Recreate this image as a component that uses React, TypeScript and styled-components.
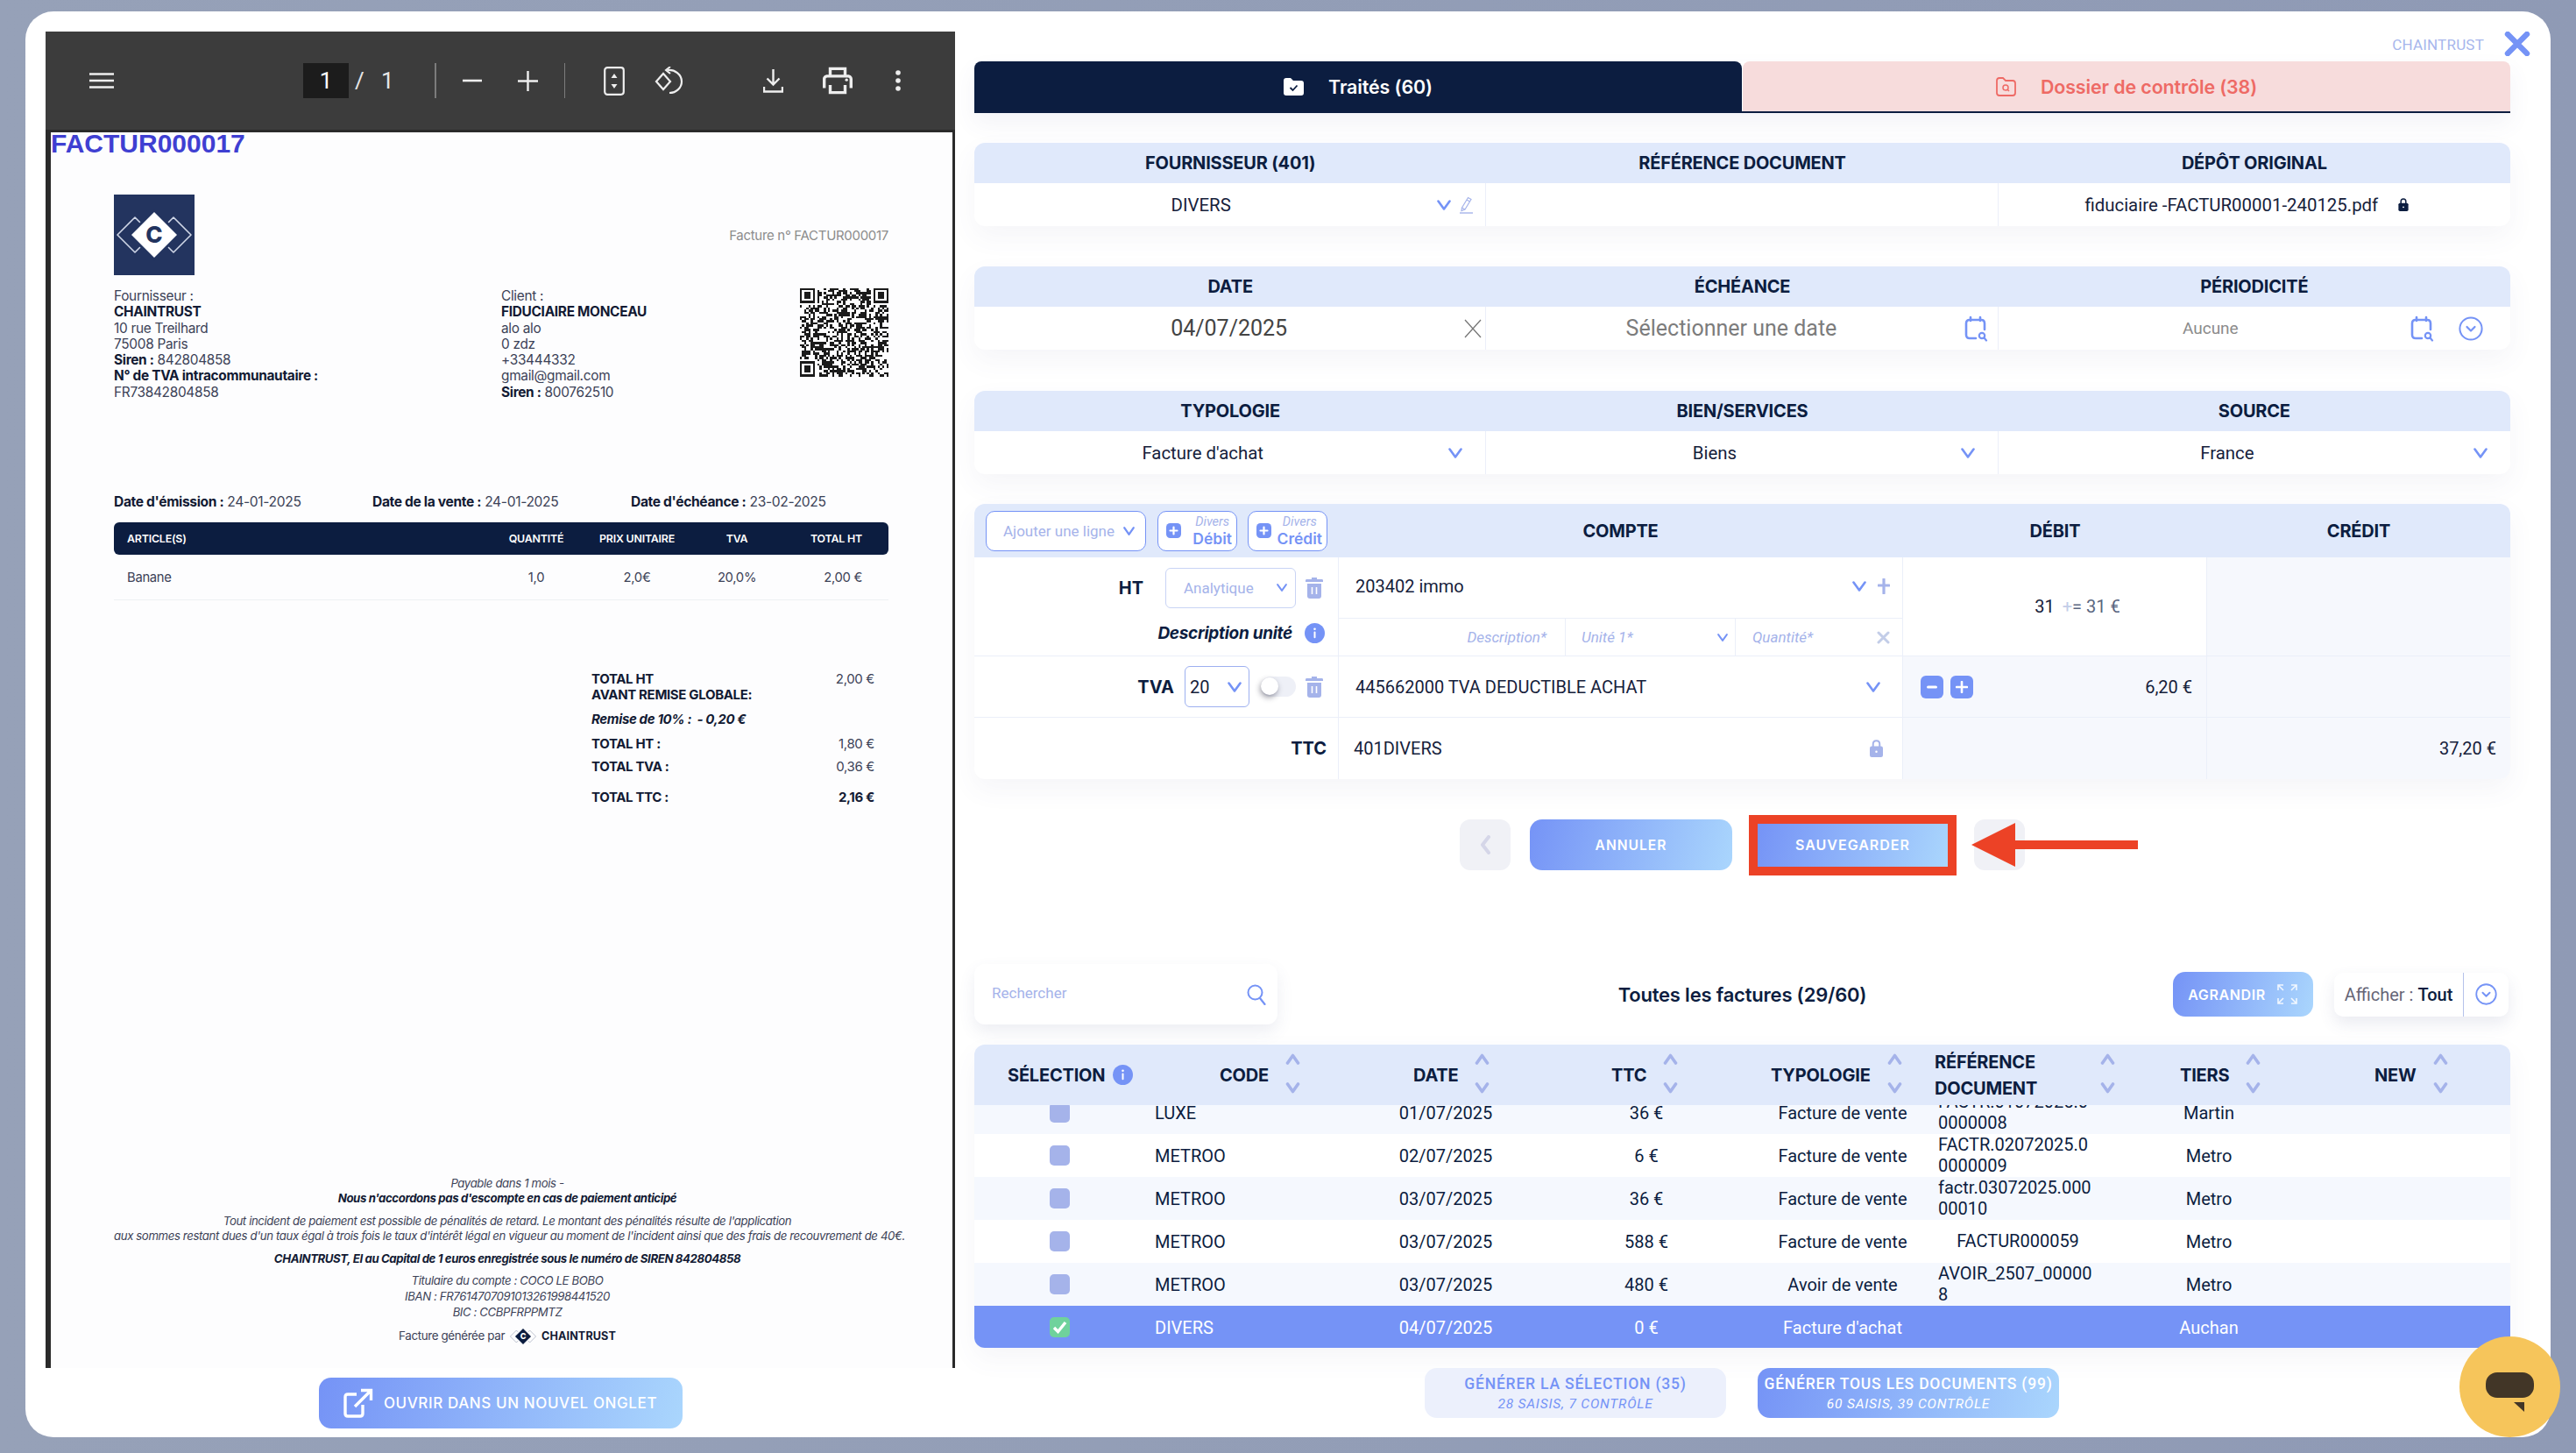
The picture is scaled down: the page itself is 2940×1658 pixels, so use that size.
import React, { useMemo } from 'react';
import styled, { createGlobalStyle } from 'styled-components';

const NAVY = '#0c1d40';
const BLUE = '#7593f6';
const SOFT = '#a5b3ea';
const HEAD = '#e0e9fb';
const LINE = '#ebeff9';
const GRADIENT = 'linear-gradient(105deg, #7593f6 0%, #aad6fd 100%)';

const rows = [
  { code: 'LUXE', date: '01/07/2025', ttc: '36 €', typo: 'Facture de vente', ref: 'FACTR.01072025.00000008', tiers: 'Martin' },
  { code: 'METROO', date: '02/07/2025', ttc: '6 €', typo: 'Facture de vente', ref: 'FACTR.02072025.00000009', tiers: 'Metro' },
  { code: 'METROO', date: '03/07/2025', ttc: '36 €', typo: 'Facture de vente', ref: 'factr.03072025.00000010', tiers: 'Metro' },
  { code: 'METROO', date: '03/07/2025', ttc: '588 €', typo: 'Facture de vente', ref: 'FACTUR000059', tiers: 'Metro' },
  { code: 'METROO', date: '03/07/2025', ttc: '480 €', typo: 'Avoir de vente', ref: 'AVOIR_2507_000008', tiers: 'Metro' },
  { code: 'DIVERS', date: '04/07/2025', ttc: '0 €', typo: "Facture d'achat", ref: '', tiers: 'Auchan', selected: true },
];

const Chevron = ({ w = 16, h = 12, color = BLUE, sw = 2.6 }: { w?: number; h?: number; color?: string; sw?: number }) => (
  <svg width={w} height={h} viewBox="0 0 16 12" fill="none" preserveAspectRatio="none">
    <path d="M1.5 1.5 L8 10.5 L14.5 1.5" stroke={color} strokeWidth={sw} strokeLinecap="round" strokeLinejoin="round" />
  </svg>
);

const CalendarSearch = () => (
  <svg width="27" height="30" viewBox="0 0 27 30" fill="none">
    <path d="M13 26 H6 Q2 26 2 22 V9 Q2 5 6 5 H19 Q23 5 23 9 V16" stroke={BLUE} strokeWidth="2.6" strokeLinecap="round" />
    <path d="M7 2 V6 M18 2 V6" stroke={BLUE} strokeWidth="2.6" strokeLinecap="round" />
    <circle cx="20" cy="23" r="3.2" stroke={BLUE} strokeWidth="2.2" />
    <path d="M22.5 25.5 L25 28.5" stroke={BLUE} strokeWidth="2.2" strokeLinecap="round" />
  </svg>
);

const CircleChevron = ({ size = 28 }: { size?: number }) => (
  <svg width={size} height={size} viewBox="0 0 28 28" fill="none">
    <circle cx="14" cy="14" r="12.6" stroke={BLUE} strokeWidth="2" />
    <path d="M9.5 12 L14 16.5 L18.5 12" stroke={BLUE} strokeWidth="2.2" strokeLinecap="round" strokeLinejoin="round" />
  </svg>
);

const Trash = () => (
  <svg width="20" height="25" viewBox="0 0 20 25" fill="none">
    <path d="M7 1 H13 V3 H19 Q20 3 20 4.5 V6 H0 V4.5 Q0 3 1 3 H7 Z" fill={SOFT} />
    <path d="M2 8 H18 V22 Q18 25 15 25 H5 Q2 25 2 22 Z" fill={SOFT} />
    <path d="M7.5 12 V20 M12.5 12 V20" stroke="#fff" strokeWidth="1.6" />
  </svg>
);

const Lock = ({ color = NAVY, w = 12, h = 16 }: { color?: string; w?: number; h?: number }) => (
  <svg width={w} height={h} viewBox="0 0 12 16" fill="none">
    <path d="M3 7 V4 Q3 1 6 1 Q9 1 9 4 V7" stroke={color} strokeWidth="1.6" />
    <rect x="0" y="6" width="12" height="10" rx="1.8" fill={color} />
    <circle cx="6" cy="11" r="1" fill="#fff" />
  </svg>
);

const Info = ({ size = 23 }: { size?: number }) => (
  <svg width={size} height={size} viewBox="0 0 23 23">
    <circle cx="11.5" cy="11.5" r="11.5" fill={BLUE} />
    <circle cx="11.5" cy="6.8" r="1.3" fill="#fff" />
    <rect x="10.5" y="9.6" width="2" height="7.6" rx="1" fill="#fff" />
  </svg>
);

const PlusTile = () => (
  <svg width="17" height="17" viewBox="0 0 17 17">
    <rect width="17" height="17" rx="4.5" fill={BLUE} />
    <path d="M8.5 4.5 V12.5 M4.5 8.5 H12.5" stroke="#fff" strokeWidth="2.2" strokeLinecap="round" />
  </svg>
);

const SortArrows = () => (
  <SortStack>
    <svg width="17" height="13" viewBox="0 0 17 13" fill="none">
      <path d="M2.5 11 L8.5 2.5 L14.5 11" stroke={SOFT} strokeWidth="3.6" strokeLinecap="round" strokeLinejoin="round" />
    </svg>
    <svg width="17" height="13" viewBox="0 0 17 13" fill="none">
      <path d="M2.5 2 L8.5 10.5 L14.5 2" stroke={SOFT} strokeWidth="3.6" strokeLinecap="round" strokeLinejoin="round" />
    </svg>
  </SortStack>
);

const Emblem = ({ fill, tile, stroke }: { fill: string; tile: string; stroke: string }) => (
  <svg width="100%" height="100%" viewBox="0 0 92 92">
    <rect width="92" height="92" fill={tile} />
    <path d="M24 26 L4 46 L24 66 L44 46 Z" fill="none" stroke={stroke} strokeWidth="1.6" strokeLinejoin="round" />
    <path d="M68 26 L88 46 L68 66 L48 46 Z" fill="none" stroke={stroke} strokeWidth="1.6" strokeLinejoin="round" />
    <path d="M46 20 L72 46 L46 72 L20 46 Z" fill={fill} stroke={tile} strokeWidth="6" strokeLinejoin="round" paintOrder="stroke" />
    <text x="46" y="55" textAnchor="middle" fontFamily="Inter, sans-serif" fontWeight="800" fontSize="26" fill={fill === '#fff' ? tile : '#fff'}>C</text>
  </svg>
);

function QrCode() {
  const d = useMemo(() => {
    const n = 41;
    let seed = 73;
    const next = () => {
      seed = (seed * 16807) % 2147483647;
      return seed % 100 < 50;
    };
    const inFinder = (x: number, y: number, ox: number, oy: number) => x >= ox && x < ox + 8 && y >= oy && y < oy + 8;
    let out = '';
    const cell = (x: number, y: number) => {
      out += `M${x} ${y}h1v1h-1z`;
    };
    for (let y = 0; y < n; y++) {
      for (let x = 0; x < n; x++) {
        const a = next();
        if (inFinder(x, y, 0, 0) || inFinder(x, y, n - 8, 0) || inFinder(x, y, 0, n - 8)) continue;
        if (a) cell(x, y);
      }
    }
    [[0, 0], [n - 7, 0], [0, n - 7]].forEach(([ox, oy]) => {
      for (let y = 0; y < 7; y++) {
        for (let x = 0; x < 7; x++) {
          const ring = x === 0 || y === 0 || x === 6 || y === 6;
          const core = x >= 2 && x <= 4 && y >= 2 && y <= 4;
          if (ring || core) cell(ox + x, oy + y);
        }
      }
    });
    return out;
  }, []);
  return (
    <QrBox viewBox="0 0 41 41" shapeRendering="crispEdges">
      <path d={d} fill="#1b1b1b" />
    </QrBox>
  );
}

export default function App() {
  return (
    <>
      <GlobalStyle />
      <Modal>
        <LeftPane>
          <Viewer>
            <Toolbar>
              <ToolIcon $ml={50}>
                <svg width="28" height="18" viewBox="0 0 28 18"><path d="M0 1.5 H28 M0 9 H28 M0 16.5 H28" stroke="#eee" strokeWidth="2.4" /></svg>
              </ToolIcon>
              <PageBox>1</PageBox>
              <PageCount>/&nbsp;&nbsp;&nbsp;1</PageCount>
              <ToolDivider $ml={25} />
              <ToolIcon $ml={30}>
                <svg width="22" height="4" viewBox="0 0 22 4"><rect width="22" height="2.6" y="0.7" fill="#eee" /></svg>
              </ToolIcon>
              <ToolIcon $ml={41}>
                <svg width="23" height="23" viewBox="0 0 23 23"><path d="M11.5 0 V23 M0 11.5 H23" stroke="#eee" strokeWidth="2.4" /></svg>
              </ToolIcon>
              <ToolDivider $ml={30} />
              <ToolIcon $ml={44}>
                <svg width="24" height="33" viewBox="0 0 24 33" fill="none">
                  <rect x="1.2" y="1.2" width="21.6" height="30.6" rx="3" stroke="#eee" strokeWidth="2.2" />
                  <path d="M12 8 L15.5 13 H8.5 Z M12 25 L15.5 20 H8.5 Z" fill="#eee" />
                </svg>
              </ToolIcon>
              <ToolIcon $ml={34}>
                <svg width="34" height="32" viewBox="0 0 34 32" fill="none">
                  <path d="M2 17 L10 8 L18 17 L10 26 Z" stroke="#eee" strokeWidth="2.2" />
                  <path d="M15 4 C23 3 31 9 31 17 C31 24 25 30 17 30" stroke="#eee" strokeWidth="2.2" />
                  <path d="M18 0 L13 4 L18 8" stroke="#eee" strokeWidth="2" fill="none" />
                </svg>
              </ToolIcon>
              <ToolIcon $ml={90}>
                <svg width="23" height="27" viewBox="0 0 23 27" fill="none">
                  <path d="M11.5 0 V17 M4.5 10.5 L11.5 17.5 L18.5 10.5" stroke="#eee" strokeWidth="2.4" />
                  <path d="M1 20 V25.5 H22 V20" stroke="#eee" strokeWidth="2.4" />
                </svg>
              </ToolIcon>
              <ToolIcon $ml={45}>
                <svg width="34" height="34" viewBox="2 2 20 20" fill="#eee">
                  <path d="M19 8h-1V3H6v5H5c-1.66 0-3 1.34-3 3v6h4v4h12v-4h4v-6c0-1.66-1.34-3-3-3zM8 5h8v3H8V5zm8 14H8v-4h8v4zm2-2v-2H6v2H4v-6c0-.55.45-1 1-1h14c.55 0 1 .45 1 1v6h-2z" />
                  <circle cx="18" cy="11.5" r="1" />
                </svg>
              </ToolIcon>
              <ToolIcon $ml={49}>
                <svg width="6" height="24" viewBox="0 0 6 24" fill="#eee"><circle cx="3" cy="3" r="2.8" /><circle cx="3" cy="12" r="2.8" /><circle cx="3" cy="21" r="2.8" /></svg>
              </ToolIcon>
            </Toolbar>
            <PageFrame>
              <PageTitle>FACTUR000017</PageTitle>
              <PageBody>
                <InvoiceTop>
                  <LogoBox>
                    <Emblem fill="#fff" tile="#23345f" stroke="#cfd6e6" />
                  </LogoBox>
                  <InvoiceNumber>Facture n° FACTUR000017</InvoiceNumber>
                </InvoiceTop>
                <Parties>
                  <PartyBlock>
                    <span>Fournisseur :</span>
                    <b>CHAINTRUST</b>
                    <span>10 rue Treilhard</span>
                    <span>75008 Paris</span>
                    <span><b>Siren :</b> 842804858</span>
                    <b>N° de TVA intracommunautaire :</b>
                    <span>FR73842804858</span>
                  </PartyBlock>
                  <PartyBlock>
                    <span>Client :</span>
                    <b>FIDUCIAIRE MONCEAU</b>
                    <span>alo alo</span>
                    <span>0 zdz</span>
                    <span>+33444332</span>
                    <span>gmail@gmail.com</span>
                    <span><b>Siren :</b> 800762510</span>
                  </PartyBlock>
                  <QrCode />
                </Parties>
                <DatesRow>
                  <span><b>Date d'émission :</b> 24-01-2025</span>
                  <span><b>Date de la vente :</b> 24-01-2025</span>
                  <span><b>Date d'échéance :</b> 23-02-2025</span>
                </DatesRow>
                <ItemsHead>
                  <span>ARTICLE(S)</span>
                  <ItemCenter>QUANTITÉ</ItemCenter>
                  <ItemCenter>PRIX UNITAIRE</ItemCenter>
                  <ItemCenter>TVA</ItemCenter>
                  <ItemRight>TOTAL HT</ItemRight>
                </ItemsHead>
                <ItemRow>
                  <span>Banane</span>
                  <ItemCenter>1,0</ItemCenter>
                  <ItemCenter>2,0€</ItemCenter>
                  <ItemCenter>20,0%</ItemCenter>
                  <ItemRight>2,00 €</ItemRight>
                </ItemRow>
                <Totals>
                  <TotalLine $mt={0}>
                    <b>TOTAL HT<br />AVANT REMISE GLOBALE:</b>
                    <span>2,00 €</span>
                  </TotalLine>
                  <TotalLine $mt={9}>
                    <b><i>Remise de 10% :&nbsp; - 0,20 €</i></b>
                  </TotalLine>
                  <TotalLine $mt={10}>
                    <b>TOTAL HT :</b>
                    <span>1,80 €</span>
                  </TotalLine>
                  <TotalLine $mt={7}>
                    <b>TOTAL TVA :</b>
                    <span>0,36 €</span>
                  </TotalLine>
                  <TotalLine $mt={17}>
                    <b>TOTAL TTC :</b>
                    <b>2,16 €</b>
                  </TotalLine>
                </Totals>
              </PageBody>
              <PageFooter>
                <FooterLine $mt={0}>Payable dans 1 mois -</FooterLine>
                <FooterLine $mt={0}><b>Nous n'accordons pas d'escompte en cas de paiement anticipé</b></FooterLine>
                <FooterLine $mt={8}>Tout incident de paiement est possible de pénalités de retard. Le montant des pénalités résulte de l'application</FooterLine>
                <FooterLine $mt={0}>aux sommes restant dues d'un taux égal à trois fois le taux d'intérêt légal en vigueur au moment de l'incident ainsi que des frais de recouvrement de 40€.</FooterLine>
                <FooterLine $mt={8}><b>CHAINTRUST, EI au Capital de 1 euros enregistrée sous le numéro de SIREN 842804858</b></FooterLine>
                <FooterLine $mt={8}>Titulaire du compte : COCO LE BOBO</FooterLine>
                <FooterLine $mt={0}>IBAN : FR7614707091013261998441520</FooterLine>
                <FooterLine $mt={0}>BIC : CCBPFRPPMTZ</FooterLine>
                <GeneratedBy>
                  <span>Facture générée par</span>
                  <SmallEmblem>
                    <Emblem fill={NAVY} tile="#fdfdfe" stroke="#8a93a8" />
                  </SmallEmblem>
                  <strong>CHAINTRUST</strong>
                </GeneratedBy>
              </PageFooter>
            </PageFrame>
          </Viewer>
          <OpenTabButton>
            <svg width="34" height="34" viewBox="0 0 34 34" fill="none">
              <path d="M15 7 H5 Q2 7 2 10 V29 Q2 32 5 32 H19 Q22 32 22 29 V19" stroke="#fff" strokeWidth="3.4" />
              <path d="M13 21 L31 3 M20 2.5 H31.5 V14" stroke="#fff" strokeWidth="3.4" />
            </svg>
            OUVRIR DANS UN NOUVEL ONGLET
          </OpenTabButton>
        </LeftPane>

        <RightPane>
          <BrandRow>
            <BrandName>CHAINTRUST</BrandName>
            <svg width="30" height="28" viewBox="0 0 30 28" fill="none">
              <path d="M4 3 L26 25 M26 3 L4 25" stroke={BLUE} strokeWidth="6.4" strokeLinecap="round" />
            </svg>
          </BrandRow>

          <Tabs>
            <Tab $active>
              <svg width="23" height="20" viewBox="0 0 23 20">
                <path d="M0 3 Q0 0 3 0 H8 L11 3 H20 Q23 3 23 6 V17 Q23 20 20 20 H3 Q0 20 0 17 Z" fill="#fff" />
                <path d="M7.5 11 L10.5 14 L15.5 8.5" fill="none" stroke={NAVY} strokeWidth="1.8" />
              </svg>
              <span>Traités (60)</span>
            </Tab>
            <Tab>
              <svg width="23" height="22" viewBox="0 0 23 22" fill="none">
                <path d="M1 4 Q1 1 4 1 H8 L11 4 H19 Q22 4 22 7 V18 Q22 21 19 21 H4 Q1 21 1 18 Z" stroke="#ee6a65" strokeWidth="1.8" />
                <circle cx="11" cy="12" r="3" stroke="#ee6a65" strokeWidth="1.5" />
                <path d="M13.2 14.2 L15 16" stroke="#ee6a65" strokeWidth="1.5" />
              </svg>
              <span>Dossier de contrôle (38)</span>
            </Tab>
          </Tabs>

          <FormCard $mt={34}>
            <CardHead>
              <HeadCell>FOURNISSEUR (401)</HeadCell>
              <HeadCell>RÉFÉRENCE DOCUMENT</HeadCell>
              <HeadCell>DÉPÔT ORIGINAL</HeadCell>
            </CardHead>
            <CardBody>
              <ValueCell $pr={14}>
                <ValueText $tail={11}>DIVERS</ValueText>
                <Chevron />
                <PencilBox>
                  <svg width="15" height="20" viewBox="0 0 15 20" fill="none">
                    <path d="M9.5 1.5 L13 3.5 L6 15 L2.5 13 Z M2.5 13 L2 16.5 L6 15 M8 4 L11.5 6" stroke={SOFT} strokeWidth="1.2" />
                    <path d="M0 19 H15" stroke={SOFT} strokeWidth="1.4" />
                  </svg>
                </PencilBox>
              </ValueCell>
              <ValueCell />
              <ValueCell $pr={116} $pl={76}>
                <ValueText>fiduciaire -FACTUR00001-240125.pdf</ValueText>
                <Lock w={12} h={15} />
              </ValueCell>
            </CardBody>
          </FormCard>

          <FormCard $mt={46}>
            <CardHead>
              <HeadCell>DATE</HeadCell>
              <HeadCell>ÉCHÉANCE</HeadCell>
              <HeadCell>PÉRIODICITÉ</HeadCell>
            </CardHead>
            <CardBody>
              <ValueCell $pr={4} $pl={22}>
                <DateText>04/07/2025</DateText>
                <svg width="20" height="22" viewBox="0 0 20 22" fill="none">
                  <path d="M1 1 L19 21 M19 1 L1 21" stroke="#777" strokeWidth="1.3" />
                </svg>
              </ValueCell>
              <ValueCell $pr={11} $pl={14}>
                <DateText $muted>Sélectionner une date</DateText>
                <CalendarSearch />
              </ValueCell>
              <ValueCell $pr={31} $pl={0}>
                <AucuneText>Aucune</AucuneText>
                <CalendarSearch />
                <IconGap><CircleChevron /></IconGap>
              </ValueCell>
            </CardBody>
          </FormCard>

          <FormCard $mt={47}>
            <CardHead>
              <HeadCell>TYPOLOGIE</HeadCell>
              <HeadCell>BIEN/SERVICES</HeadCell>
              <HeadCell>SOURCE</HeadCell>
            </CardHead>
            <CardBody>
              <ValueCell $pr={26} $pl={0}>
                <ValueText $tail={20}>Facture d'achat</ValueText>
                <Chevron />
              </ValueCell>
              <ValueCell $pr={26} $pl={0}>
                <ValueText $tail={20}>Biens</ValueText>
                <Chevron />
              </ValueCell>
              <ValueCell $pr={26} $pl={0}>
                <ValueText $tail={20}>France</ValueText>
                <Chevron />
              </ValueCell>
            </CardBody>
          </FormCard>

          <EntryCard>
            <EntryHead>
              <EntryTools>
                <AddLine>
                  <span>Ajouter une ligne</span>
                  <Chevron w={13} h={10} />
                </AddLine>
                <DiversButton>
                  <PlusTile />
                  <DiversText><i>Divers</i><b>Débit</b></DiversText>
                </DiversButton>
                <DiversButton>
                  <PlusTile />
                  <DiversText><i>Divers</i><b>Crédit</b></DiversText>
                </DiversButton>
              </EntryTools>
              <HeadCell>COMPTE</HeadCell>
              <HeadCell>DÉBIT</HeadCell>
              <HeadCell>CRÉDIT</HeadCell>
            </EntryHead>

            <EntryRow $h={113}>
              <LabelCell>
                <LabelTop>
                  <RowLabel>HT</RowLabel>
                  <AnalyticSelect>
                    <span>Analytique</span>
                    <Chevron w={12} h={9} />
                  </AnalyticSelect>
                  <Trash />
                </LabelTop>
                <LabelBottom>
                  <DescLabel>Description unité</DescLabel>
                  <Info />
                </LabelBottom>
              </LabelCell>
              <AccountStack>
                <AccountTop>
                  <AccountText>203402 immo</AccountText>
                  <Chevron />
                  <svg width="14" height="18" viewBox="0 0 14 18">
                    <path d="M7 1 V17 M1 8 H13" stroke={SOFT} strokeWidth="3.2" strokeLinecap="round" />
                  </svg>
                </AccountTop>
                <UnitRow>
                  <UnitDesc>Description*</UnitDesc>
                  <UnitCell>
                    <span>Unité 1*</span>
                    <Chevron w={12} h={9} />
                  </UnitCell>
                  <UnitQty>
                    <span>Quantité*</span>
                    <svg width="15" height="15" viewBox="0 0 15 15">
                      <path d="M2 2 L13 13 M13 2 L2 13" stroke="#c3cde8" strokeWidth="3" strokeLinecap="round" />
                    </svg>
                  </UnitQty>
                </UnitRow>
              </AccountStack>
              <AmountCell $center>
                <FormulaText>31 <em>+</em><span>= 31 €</span></FormulaText>
              </AmountCell>
              <AmountCell $tinted />
            </EntryRow>

            <EntryRow $h={70}>
              <LabelRowCell>
                <RowLabel>TVA</RowLabel>
                <VatSelect>
                  <span>20</span>
                  <Chevron />
                </VatSelect>
                <ToggleTrack><ToggleKnob /></ToggleTrack>
                <Trash />
              </LabelRowCell>
              <AccountLine $pr={25}>
                <AccountText>445662000 TVA DEDUCTIBLE ACHAT</AccountText>
                <Chevron />
              </AccountLine>
              <AmountCell $tinted>
                <StepGroup>
                  <StepButton>
                    <svg width="12" height="4" viewBox="0 0 12 4"><rect width="12" height="3.2" y="0.4" rx="1.6" fill="#fff" /></svg>
                  </StepButton>
                  <StepButton>
                    <svg width="14" height="14" viewBox="0 0 14 14"><path d="M7 1 V13 M1 7 H13" stroke="#fff" strokeWidth="2.6" strokeLinecap="round" /></svg>
                  </StepButton>
                </StepGroup>
                <AmountText>6,20 €</AmountText>
              </AmountCell>
              <AmountCell $tinted />
            </EntryRow>

            <EntryRow $h={70}>
              <TtcCell><RowLabel>TTC</RowLabel></TtcCell>
              <AccountLine $pr={22} $pl={17}>
                <AccountText>401DIVERS</AccountText>
                <Lock color={SOFT} w={15} h={20} />
              </AccountLine>
              <AmountCell $tinted />
              <AmountCell $tinted>
                <AmountText>37,20 €</AmountText>
              </AmountCell>
            </EntryRow>
          </EntryCard>

          <ActionRow>
            <NavButton>
              <svg width="14" height="22" viewBox="0 0 14 22" fill="none">
                <path d="M11 2 L4 11 L11 20" stroke="#d5d6e8" strokeWidth="4" strokeLinecap="round" strokeLinejoin="round" />
              </svg>
            </NavButton>
            <CancelButton>ANNULER</CancelButton>
            <SaveButton>SAUVEGARDER</SaveButton>
            <NavButton />
            <ArrowMark width="190" height="52" viewBox="0 0 190 52">
              <path d="M0 26 L50 1 V21 H190 V31 H50 V51 Z" fill="#ec4226" />
            </ArrowMark>
          </ActionRow>

          <SearchRow>
            <SearchBox>
              <span>Rechercher</span>
              <svg width="22" height="24" viewBox="0 0 22 24" fill="none">
                <circle cx="9.5" cy="9.5" r="8" stroke={BLUE} strokeWidth="2" />
                <path d="M15 16 L20.5 23" stroke={BLUE} strokeWidth="2.2" strokeLinecap="round" />
              </svg>
            </SearchBox>
            <ListTitle>Toutes les factures (29/60)</ListTitle>
            <SearchTools>
              <ExpandButton>
                AGRANDIR
                <svg width="25" height="25" viewBox="0 0 25 25" fill="none">
                  <path d="M2 8 V2 H8 M2 2 L8 8 M23 8 V2 H17 M23 2 L17 8 M2 17 V23 H8 M2 23 L8 17 M23 17 V23 H17 M23 23 L17 17" stroke="#fff" strokeWidth="1.6" opacity="0.85" />
                </svg>
              </ExpandButton>
              <FilterBox>
                <FilterLabel><span>Afficher : <b>Tout</b></span></FilterLabel>
                <FilterIcon><CircleChevron size={25} /></FilterIcon>
              </FilterBox>
            </SearchTools>
          </SearchRow>

          <TableCard>
            <TableHead>
              <SelectHead>
                <span>SÉLECTION</span>
                <Info />
              </SelectHead>
              <SortHead $pl={86}><span>CODE</span><SortArrows /></SortHead>
              <SortHead $pl={65}><span>DATE</span><SortArrows /></SortHead>
              <SortHead $pl={87}><span>TTC</span><SortArrows /></SortHead>
              <SortHead $pl={15}><span>TYPOLOGIE</span><SortArrows /></SortHead>
              <SortHead $pl={8} $gap={72}><RefHead>RÉFÉRENCE DOCUMENT</RefHead><SortArrows /></SortHead>
              <SortHead $pl={82}><span>TIERS</span><SortArrows /></SortHead>
              <SortHead $pl={74}><span>NEW</span><SortArrows /></SortHead>
            </TableHead>
            <TableScroll>
              <TableRows>
                {rows.map((r, i) => (
                  <TableRow key={i} $odd={i % 2 === 0} $selected={r.selected}>
                    <TableCell>
                      <CheckBox $checked={r.selected}>
                        {r.selected && (
                          <svg width="17" height="15" viewBox="0 0 17 15" fill="none">
                            <path d="M2 8 L6.5 12.5 L15 2" stroke="#fff" strokeWidth="3.4" />
                          </svg>
                        )}
                      </CheckBox>
                    </TableCell>
                    <CodeCell>{r.code}</CodeCell>
                    <TableCell>{r.date}</TableCell>
                    <TableCell>{r.ttc}</TableCell>
                    <TableCell>{r.typo}</TableCell>
                    <RefCell><RefText>{r.ref}</RefText></RefCell>
                    <TableCell>{r.tiers}</TableCell>
                    <TableCell />
                  </TableRow>
                ))}
              </TableRows>
            </TableScroll>
          </TableCard>

          <GenerateRow>
            <GenerateButton>
              <b>GÉNÉRER LA SÉLECTION (35)</b>
              <i>28 SAISIS, 7 CONTRÔLE</i>
            </GenerateButton>
            <GenerateButton $primary>
              <b>GÉNÉRER TOUS LES DOCUMENTS (99)</b>
              <i>60 SAISIS, 39 CONTRÔLE</i>
            </GenerateButton>
          </GenerateRow>
        </RightPane>

        <ChatBubble>
          <svg width="56" height="46" viewBox="0 0 56 46">
            <rect x="0" y="0" width="55" height="29" rx="13" fill="#423627" />
            <path d="M32 34 H44 V45 Z" fill="#423627" />
          </svg>
        </ChatBubble>
      </Modal>
    </>
  );
}

const GlobalStyle = createGlobalStyle`
  html, body {
    margin: 0;
    width: 2940px;
    height: 1658px;
    overflow: hidden;
    background: linear-gradient(90deg, #96a1b8 0%, #8f9ab5 100%);
    font-family: Roboto, "Liberation Sans", sans-serif;
  }
  * { box-sizing: border-box; }
`;

const Modal = styled.div`
  position: relative;
  margin: 13px 0 0 29px;
  width: 2882px;
  height: 1627px;
  padding: 23px 46px 0 23px;
  display: flex;
  gap: 22px;
  background: #fff;
  border-radius: 32px;
`;

const LeftPane = styled.div`
  width: 1038px;
  display: flex;
  flex-direction: column;
  align-items: center;
`;

const Viewer = styled.div`
  width: 100%;
  height: 1525px;
  display: flex;
  flex-direction: column;
`;

const Toolbar = styled.div`
  height: 112px;
  flex: none;
  display: flex;
  align-items: center;
  background: #3c3c3c;
`;

const ToolIcon = styled.div<{ $ml: number }>`
  margin-left: ${(p) => p.$ml}px;
  display: flex;
  align-items: center;
`;

const ToolDivider = styled.div<{ $ml: number }>`
  margin-left: ${(p) => p.$ml}px;
  width: 1.5px;
  height: 40px;
  background: #7c7c7c;
`;

const PageBox = styled.div`
  margin-left: 216px;
  width: 52px;
  height: 40px;
  display: flex;
  align-items: center;
  justify-content: center;
  background: #1c1c1c;
  color: #fff;
  font-size: 26px;
`;

const PageCount = styled.div`
  margin-left: 7px;
  color: #e6e6e6;
  font-size: 26px;
  width: 66px;
  white-space: nowrap;
`;

const PageFrame = styled.div`
  flex: 1;
  background: #fdfdfe;
  border-style: solid;
  border-color: #2a2a2a;
  border-width: 3px 3px 0 6px;
  overflow: hidden;
  font-family: Inter, "Open Sans", sans-serif;
  color: #20263a;
`;

const PageTitle = styled.div`
  height: 29px;
  line-height: 26px;
  color: #3f3fd2;
  font-family: "Liberation Sans", Arial, sans-serif;
  font-weight: 700;
  font-size: 30px;
  white-space: nowrap;
`;

const PageBody = styled.div`
  padding: 42px 73px 0 72px;
`;

const InvoiceTop = styled.div`
  display: flex;
  align-items: center;
  justify-content: space-between;
`;

const LogoBox = styled.div`
  width: 92px;
  height: 92px;
`;

const InvoiceNumber = styled.div`
  font-size: 15px;
  letter-spacing: -0.3px;
  color: #8c8c8c;
`;

const Parties = styled.div`
  margin-top: 14px;
  display: grid;
  grid-template-columns: 442px 1fr 101px;
`;

const PartyBlock = styled.div`
  display: flex;
  flex-direction: column;
  padding-top: 1px;
  font-size: 15.4px;
  line-height: 18.3px;
  letter-spacing: -0.3px;
  color: #3c4257;
  white-space: nowrap;

  b {
    color: #121a33;
    font-weight: 700;
  }
`;

const QrBox = styled.svg`
  width: 101px;
  height: 102px;
`;

const DatesRow = styled.div`
  margin-top: 107px;
  display: grid;
  grid-template-columns: repeat(3, 295px);
  font-size: 15.6px;
  line-height: 18px;
  letter-spacing: -0.35px;
  color: #3c4257;

  b {
    color: #121a33;
    font-weight: 700;
  }
`;

const ItemsHead = styled.div`
  margin-top: 14px;
  height: 37px;
  padding: 0 30px 0 15px;
  display: grid;
  grid-template-columns: 417px 100px 130px 98px 1fr;
  align-items: center;
  background: ${NAVY};
  border-radius: 6px;
  color: #fff;
  font-size: 12.4px;
  font-weight: 600;
  letter-spacing: -0.2px;
`;

const ItemCenter = styled.span`
  text-align: center;
`;

const ItemRight = styled.span`
  text-align: right;
`;

const ItemRow = styled.div`
  height: 52px;
  padding: 0 30px 0 15px;
  display: grid;
  grid-template-columns: 417px 100px 130px 98px 1fr;
  align-items: center;
  border-bottom: 1.5px solid #eef0f3;
  font-size: 14.8px;
  letter-spacing: -0.3px;
  color: #3c4257;
`;

const Totals = styled.div`
  margin: 81px 0 0 545px;
  width: 323px;
  font-size: 15px;
  line-height: 18.4px;
  letter-spacing: -0.35px;
  color: #3c4257;
  white-space: nowrap;

  b {
    color: #121a33;
    font-weight: 700;
  }
`;

const TotalLine = styled.div<{ $mt: number }>`
  margin-top: ${(p) => p.$mt}px;
  display: flex;
  justify-content: space-between;
  align-items: flex-start;
`;

const PageFooter = styled.div`
  margin: 422px 0 0 72px;
  width: 898px;
  text-align: center;
  font-size: 13.2px;
  line-height: 17.6px;
  letter-spacing: -0.38px;
  font-style: italic;
  color: #3c4257;

  b {
    color: #121a33;
    font-weight: 700;
  }
`;

const FooterLine = styled.div<{ $mt: number }>`
  margin-top: ${(p) => p.$mt}px;
  white-space: nowrap;
`;

const GeneratedBy = styled.div`
  margin-top: 3px;
  display: flex;
  align-items: center;
  justify-content: center;
  gap: 5px;
  font-style: normal;
  white-space: nowrap;
  font-size: 13.4px;

  strong {
    font-size: 12.6px;
    letter-spacing: 0.1px;
    font-weight: 700;
    color: #121a33;
  }
`;

const SmallEmblem = styled.div`
  width: 32px;
  height: 32px;
`;

const OpenTabButton = styled.button`
  margin-top: 11px;
  width: 415px;
  height: 58px;
  display: flex;
  align-items: center;
  justify-content: center;
  gap: 12px;
  border: 0;
  border-radius: 14px;
  background: ${GRADIENT};
  color: #fff;
  font-family: Inter, sans-serif;
  font-size: 17px;
  font-weight: 500;
  letter-spacing: 0.6px;
  white-space: nowrap;
`;

const RightPane = styled.div`
  width: 1753px;
  display: flex;
  flex-direction: column;
  color: ${NAVY};
`;

const BrandRow = styled.div`
  height: 34px;
  margin-right: -23px;
  display: flex;
  justify-content: flex-end;
  align-items: flex-start;
  gap: 23px;
`;

const BrandName = styled.span`
  margin-top: 5px;
  font-size: 17px;
  letter-spacing: 0.2px;
  color: #a7b6ec;
`;

const Tabs = styled.div`
  display: grid;
  grid-template-columns: 876px 1fr;
  gap: 1px;
  height: 59px;
  border-bottom: 2px solid ${NAVY};
  box-shadow: 0 12px 26px rgba(80, 90, 140, 0.07);
`;

const Tab = styled.div<{ $active?: boolean }>`
  display: flex;
  align-items: center;
  justify-content: center;
  gap: 28px;
  border-radius: 8px 8px 0 0;
  background: ${(p) => (p.$active ? NAVY : '#f7dcdc')};
  color: ${(p) => (p.$active ? '#fff' : '#ee6a65')};
  font-family: Inter, sans-serif;
  font-size: 21.4px;
  font-weight: 600;
  letter-spacing: -0.1px;
`;

const FormCard = styled.section<{ $mt: number }>`
  margin-top: ${(p) => p.$mt}px;
  height: 95px;
  display: grid;
  grid-template-rows: 46px 1fr;
  background: #fff;
  border-radius: 12px;
  box-shadow: 0 12px 30px rgba(80, 90, 140, 0.06);
`;

const CardHead = styled.div`
  display: grid;
  grid-template-columns: repeat(3, 1fr);
  background: ${HEAD};
  border-radius: 12px 12px 0 0;
`;

const HeadCell = styled.div`
  display: flex;
  align-items: center;
  justify-content: center;
  font-family: Inter, sans-serif;
  font-size: 20px;
  font-weight: 700;
  letter-spacing: -0.2px;
  color: ${NAVY};
`;

const CardBody = styled.div`
  display: grid;
  grid-template-columns: repeat(3, 1fr);
`;

const ValueCell = styled.div<{ $pr?: number; $pl?: number }>`
  display: flex;
  align-items: center;
  padding: 0 ${(p) => p.$pr ?? 0}px 0 ${(p) => p.$pl ?? 0}px;
  border-right: 1px solid ${LINE};

  &:last-child {
    border-right: 0;
  }
`;

const ValueText = styled.div<{ $tail?: number }>`
  flex: 1;
  text-align: center;
  padding-right: ${(p) => p.$tail ?? 0}px;
  font-size: 20.4px;
  color: #16213b;
  white-space: nowrap;
`;

const DateText = styled.div<{ $muted?: boolean }>`
  flex: 1;
  text-align: center;
  font-size: 25px;
  color: ${(p) => (p.$muted ? '#7c7c7c' : '#444')};
  white-space: nowrap;
`;

const AucuneText = styled.div`
  flex: 1;
  text-align: center;
  padding-left: 14px;
  font-size: 19px;
  color: #8b8b8b;
`;

const IconGap = styled.div`
  margin-left: 28px;
  display: flex;
`;

const PencilBox = styled.div`
  margin-left: 10px;
  display: flex;
`;

const EntryCard = styled.section`
  margin-top: 34px;
  background: #fff;
  border-radius: 12px;
  overflow: hidden;
  box-shadow: 0 12px 30px rgba(80, 90, 140, 0.06);
`;

const ENTRY_COLUMNS = '415px 645px 347px 346px';

const EntryHead = styled.div`
  height: 61px;
  display: grid;
  grid-template-columns: ${ENTRY_COLUMNS};
  background: ${HEAD};
`;

const EntryTools = styled.div`
  display: flex;
  align-items: center;
  gap: 12px;
  padding-left: 13px;
`;

const AddLine = styled.div`
  width: 183px;
  height: 46px;
  margin-right: 1px;
  padding: 0 12px 0 19px;
  display: flex;
  align-items: center;
  justify-content: space-between;
  background: #fff;
  border: 1px solid ${BLUE};
  border-radius: 10px;
  color: ${SOFT};
  font-size: 17px;
  white-space: nowrap;
`;

const DiversButton = styled.div`
  width: 91px;
  height: 46px;
  padding: 0 5px 0 9px;
  display: flex;
  align-items: center;
  justify-content: space-between;
  background: #fff;
  border: 1px solid ${BLUE};
  border-radius: 10px;
`;

const DiversText = styled.div`
  display: flex;
  flex-direction: column;
  align-items: center;

  i {
    font-size: 14.5px;
    line-height: 17px;
    color: ${SOFT};
  }

  b {
    font-family: Inter, sans-serif;
    font-size: 17.5px;
    line-height: 21px;
    font-weight: 600;
    color: ${BLUE};
  }
`;

const EntryRow = styled.div<{ $h: number }>`
  height: ${(p) => p.$h}px;
  display: grid;
  grid-template-columns: ${ENTRY_COLUMNS};
  border-bottom: 1.5px solid ${LINE};

  &:last-child {
    border-bottom: 0;
  }
`;

const LabelCell = styled.div`
  display: flex;
  flex-direction: column;
`;

const LabelTop = styled.div`
  height: 69px;
  padding-right: 17px;
  display: flex;
  align-items: center;
  justify-content: flex-end;
`;

const RowLabel = styled.span`
  font-family: Inter, sans-serif;
  font-size: 20px;
  font-weight: 700;
  color: ${NAVY};
`;

const AnalyticSelect = styled.div`
  margin: 0 11px 0 25px;
  width: 149px;
  height: 46px;
  padding: 0 9px 0 20px;
  display: flex;
  align-items: center;
  justify-content: space-between;
  border: 1px solid #c9d4f5;
  border-radius: 6px;
  color: ${SOFT};
  font-size: 17px;
`;

const LabelBottom = styled.div`
  flex: 1;
  padding: 0 15px 8px 0;
  display: flex;
  align-items: center;
  justify-content: flex-end;
  gap: 14px;
`;

const DescLabel = styled.span`
  font-family: Inter, sans-serif;
  font-size: 19px;
  font-style: italic;
  font-weight: 700;
  letter-spacing: -0.3px;
  color: ${NAVY};
`;

const AccountStack = styled.div`
  display: flex;
  flex-direction: column;
  border-left: 1px solid ${LINE};
  border-right: 1px solid ${LINE};
`;

const AccountTop = styled.div`
  height: 69px;
  padding: 0 14px 3px 19px;
  display: flex;
  align-items: center;
  gap: 13px;
`;

const AccountText = styled.span`
  flex: 1;
  font-size: 20px;
  color: #16213b;
  white-space: nowrap;
`;

const UnitRow = styled.div`
  flex: 1;
  display: grid;
  grid-template-columns: 258px 195px 1fr;
  border-top: 1.5px solid ${LINE};
  border-left: 1px solid ${LINE};
  margin-left: -1px;
  color: ${SOFT};
  font-size: 17px;
  font-style: italic;
`;

const UnitDesc = styled.div`
  display: flex;
  align-items: center;
  justify-content: flex-end;
  padding-right: 21px;
`;

const UnitCell = styled.div`
  display: flex;
  align-items: center;
  justify-content: space-between;
  padding: 0 8px 0 18px;
  border-left: 1px solid ${LINE};
  border-right: 1px solid ${LINE};
`;

const UnitQty = styled.div`
  display: flex;
  align-items: center;
  justify-content: space-between;
  padding: 0 14px 0 19px;
`;

const AmountCell = styled.div<{ $tinted?: boolean; $center?: boolean }>`
  display: flex;
  align-items: center;
  justify-content: ${(p) => (p.$center ? 'center' : 'flex-end')};
  padding: ${(p) => (p.$center ? '0 0 0 52px' : '0 16px')};
  background: ${(p) => (p.$tinted ? '#f6f8fd' : '#fff')};
  border-right: 1px solid ${LINE};

  &:last-child {
    border-right: 0;
  }
`;

const FormulaText = styled.span`
  font-size: 20px;
  color: #16213b;

  em {
    font-style: normal;
    margin: 0 0 0 4px;
    color: #c3cde8;
  }

  span {
    color: #5a6680;
  }
`;

const AmountText = styled.span`
  font-size: 20px;
  color: #16213b;
`;

const StepGroup = styled.div`
  margin-right: auto;
  margin-left: 4px;
  display: flex;
  gap: 8px;
`;

const StepButton = styled.div`
  width: 26px;
  height: 26px;
  display: flex;
  align-items: center;
  justify-content: center;
  background: ${BLUE};
  border-radius: 6px;
`;

const LabelRowCell = styled.div`
  padding-right: 17px;
  display: flex;
  align-items: center;
  justify-content: flex-end;
`;

const VatSelect = styled.div`
  margin: 0 13px 0 12px;
  width: 74px;
  height: 47px;
  padding: 0 8px 0 5px;
  display: flex;
  align-items: center;
  justify-content: space-between;
  border: 1px solid #9db0f0;
  border-radius: 6px;
  font-size: 20px;
  color: #16213b;
`;

const ToggleTrack = styled.div`
  position: relative;
  margin-right: 11px;
  width: 40px;
  height: 23px;
  background: #eef0f7;
  border-radius: 12px;
`;

const ToggleKnob = styled.div`
  position: absolute;
  left: 0;
  top: 1px;
  width: 20px;
  height: 20px;
  background: #fff;
  border-radius: 50%;
  box-shadow: -1px 3px 6px rgba(40, 40, 60, 0.45);
`;

const AccountLine = styled.div<{ $pr: number; $pl?: number }>`
  padding: 0 ${(p) => p.$pr}px 0 ${(p) => p.$pl ?? 19}px;
  display: flex;
  align-items: center;
  border-left: 1px solid ${LINE};
  border-right: 1px solid ${LINE};
`;

const TtcCell = styled.div`
  padding-right: 13px;
  display: flex;
  align-items: center;
  justify-content: flex-end;
`;

const ActionRow = styled.div`
  position: relative;
  margin-top: 46px;
  padding-left: 554px;
  display: flex;
  align-items: center;
  height: 58px;
`;

const NavButton = styled.div`
  width: 58px;
  height: 58px;
  display: flex;
  align-items: center;
  justify-content: center;
  background: #f0f1f6;
  border-radius: 12px;
`;

const CancelButton = styled.button`
  margin: 0 29px 0 22px;
  width: 231px;
  height: 58px;
  border: 0;
  border-radius: 14px;
  background: ${GRADIENT};
  color: #fff;
  font-family: Inter, sans-serif;
  font-size: 15.6px;
  font-weight: 600;
  letter-spacing: 1px;
`;

const SaveButton = styled.button`
  margin-right: 30px;
  width: 217px;
  height: 49px;
  border: 0;
  background: ${GRADIENT};
  outline: 10px solid #ec4226;
  color: #fff;
  font-family: Inter, sans-serif;
  font-size: 16px;
  font-weight: 600;
  letter-spacing: 1px;
`;

const ArrowMark = styled.svg`
  position: absolute;
  left: 1138px;
  top: 3px;
`;

const SearchRow = styled.div`
  margin-top: 107px;
  height: 69px;
  display: grid;
  grid-template-columns: 1fr auto 1fr;
  align-items: center;
`;

const SearchBox = styled.div`
  width: 346px;
  height: 69px;
  padding: 0 13px 0 20px;
  display: flex;
  align-items: center;
  justify-content: space-between;
  background: #fff;
  border-radius: 12px;
  box-shadow: 0 8px 18px rgba(80, 90, 140, 0.1);
  color: ${SOFT};
  font-size: 17px;

  span {
    margin-top: -4px;
  }
`;

const ListTitle = styled.div`
  font-family: Inter, sans-serif;
  font-size: 22px;
  font-weight: 600;
  letter-spacing: -0.2px;
  color: ${NAVY};
`;

const SearchTools = styled.div`
  padding-right: 2px;
  display: flex;
  justify-content: flex-end;
  align-items: center;
  gap: 24px;
`;

const ExpandButton = styled.button`
  width: 160px;
  height: 51px;
  display: flex;
  align-items: center;
  justify-content: center;
  gap: 12px;
  border: 0;
  border-radius: 14px;
  background: ${GRADIENT};
  color: #fff;
  font-family: Inter, sans-serif;
  font-size: 16px;
  font-weight: 600;
  letter-spacing: 0.6px;
`;

const FilterBox = styled.div`
  width: 199px;
  height: 50px;
  display: flex;
  background: #fff;
  border-radius: 10px;
  box-shadow: 0 8px 18px rgba(80, 90, 140, 0.12);
`;

const FilterLabel = styled.div`
  width: 148px;
  display: flex;
  align-items: center;
  justify-content: center;
  border-right: 1.5px solid #b5c2ea;
  font-size: 20px;
  color: #667;
  white-space: pre;

  b {
    font-weight: 500;
    color: ${NAVY};
  }
`;

const FilterIcon = styled.div`
  flex: 1;
  display: flex;
  align-items: center;
  justify-content: center;
`;

const TableCard = styled.section`
  margin-top: 23px;
  border-radius: 12px;
  overflow: hidden;
  box-shadow: 0 12px 30px rgba(80, 90, 140, 0.06);
`;

const TABLE_COLUMNS = '194px 242px 204px 254px 194px 206px 230px 229px';

const TableHead = styled.div`
  height: 69px;
  display: grid;
  grid-template-columns: ${TABLE_COLUMNS};
  background: ${HEAD};
  font-family: Inter, sans-serif;
  font-size: 20px;
  font-weight: 700;
  letter-spacing: -0.2px;
  color: ${NAVY};
`;

const SelectHead = styled.div`
  padding-left: 38px;
  display: flex;
  align-items: center;
  gap: 9px;
`;

const SortHead = styled.div<{ $pl: number; $gap?: number }>`
  padding-left: ${(p) => p.$pl}px;
  display: flex;
  align-items: center;
  gap: ${(p) => p.$gap ?? 19}px;
`;

const RefHead = styled.span`
  width: 122px;
  line-height: 30px;
`;

const SortStack = styled.div`
  height: 46px;
  margin-top: -3px;
  display: flex;
  flex-direction: column;
  justify-content: space-between;
`;

const TableScroll = styled.div`
  height: 277px;
  overflow: hidden;
`;

const TableRows = styled.div`
  margin-top: -16px;
`;

const TableRow = styled.div<{ $odd?: boolean; $selected?: boolean }>`
  height: 49px;
  display: grid;
  grid-template-columns: ${TABLE_COLUMNS};
  background: ${(p) => (p.$selected ? BLUE : p.$odd ? '#f5f8fe' : '#fff')};
  color: ${(p) => (p.$selected ? '#fff' : NAVY)};
  font-size: 20px;
`;

const TableCell = styled.div`
  display: flex;
  align-items: center;
  justify-content: center;
`;

const CodeCell = styled.div`
  padding-left: 12px;
  display: flex;
  align-items: center;
`;

const RefCell = styled.div`
  padding: 0 12px;
  display: flex;
  align-items: center;
  justify-content: center;
  overflow: hidden;
`;

const RefText = styled.div`
  max-width: 182px;
  word-break: break-all;
  line-height: 23.6px;
`;

const CheckBox = styled.div<{ $checked?: boolean }>`
  width: 23px;
  height: 23px;
  display: flex;
  align-items: center;
  justify-content: center;
  border-radius: 5px;
  background: ${(p) => (p.$checked ? '#6fd29c' : SOFT)};
`;

const GenerateRow = styled.div`
  margin-top: 23px;
  padding-left: 514px;
  display: flex;
  gap: 36px;
`;

const GenerateButton = styled.button<{ $primary?: boolean }>`
  width: 344px;
  height: 57px;
  padding: 0;
  display: flex;
  flex-direction: column;
  align-items: center;
  justify-content: center;
  gap: 4px;
  border: 0;
  border-radius: 14px;
  background: ${(p) => (p.$primary ? GRADIENT : '#ecf0fc')};
  color: ${(p) => (p.$primary ? '#fff' : BLUE)};
  font-family: Roboto, sans-serif;
  white-space: nowrap;

  b {
    font-size: 17.5px;
    font-weight: 500;
    letter-spacing: 0.8px;
  }

  i {
    font-size: 15.5px;
    letter-spacing: 0.8px;
  }
`;

const ChatBubble = styled.div`
  position: absolute;
  left: 2778px;
  top: 1512px;
  width: 115px;
  height: 115px;
  padding: 41px 0 0 30px;
  background: #f6c55b;
  border-radius: 50%;
`;
